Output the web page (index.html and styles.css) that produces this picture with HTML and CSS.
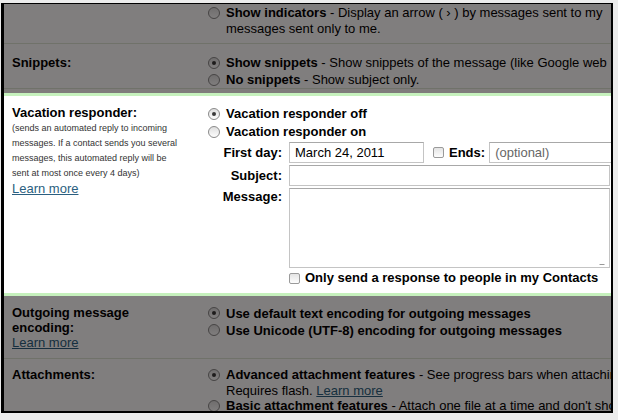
FILE: index.html
```html
<!DOCTYPE html>
<html lang="en">
  <head>
    <meta charset="UTF-8" />
    <title>Settings - Vacation responder</title>
    <link rel="stylesheet" href="styles.css">
  </head>
  <body>
    <div class="window">
      <div class="sheet">

        <div class="row dim indicators">
          <div class="label"></div>
          <div class="opts">
            <div class="opt">
              <span class="radio"></span>
              <span class="txt"><b>Show indicators</b> - Display an arrow ( &rsaquo; ) by messages sent to my<br>messages sent only to me.</span>
            </div>
          </div>
        </div>

        <div class="row dim snippets">
          <div class="label"><b>Snippets:</b></div>
          <div class="opts">
            <div class="opt"><span class="radio on"></span><span class="txt"><b>Show snippets</b> - Show snippets of the message (like Google web</span></div>
            <div class="opt"><span class="radio"></span><span class="txt"><b>No snippets</b> - Show subject only.</span></div>
          </div>
        </div>

        <div class="row vacation">
          <div class="label">
            <b>Vacation responder:</b>
            <div class="note">(sends an automated reply to incoming<br>messages. If a contact sends you several<br>messages, this automated reply will be<br>sent at most once every 4 days)</div>
            <a href="#" class="more">Learn more</a>
          </div>
          <div class="opts">
            <div class="opt"><span class="radio on"></span><span class="txt"><b>Vacation responder off</b></span></div>
            <div class="opt"><span class="radio"></span><span class="txt"><b>Vacation responder on</b></span></div>
            <div class="form">
              <label class="flabel">First day:</label>
              <div class="dates">
                <div class="field date">March 24, 2011</div>
                <span class="check"></span>
                <b class="ends">Ends:</b>
                <div class="field end">(optional)</div>
              </div>
              <label class="flabel">Subject:</label>
              <div class="field subject"></div>
              <label class="flabel">Message:</label>
              <div class="field message"><span class="grip"></span></div>
              <div class="contacts">
                <span class="check"></span>
                <b>Only send a response to people in my Contacts</b>
              </div>
            </div>
          </div>
        </div>

        <div class="row dim encoding">
          <div class="label"><b>Outgoing message<br>encoding:</b><br><a href="#" class="more">Learn more</a></div>
          <div class="opts">
            <div class="opt"><span class="radio on"></span><span class="txt"><b>Use default text encoding for outgoing messages</b></span></div>
            <div class="opt"><span class="radio"></span><span class="txt"><b>Use Unicode (UTF-8) encoding for outgoing messages</b></span></div>
          </div>
        </div>

        <div class="row dim attachments">
          <div class="label"><b>Attachments:</b></div>
          <div class="opts">
            <div class="opt"><span class="radio on"></span><span class="txt"><b>Advanced attachment features</b> - See progress bars when attaching files.<br>Requires flash. <a href="#" class="more">Learn more</a></span></div>
            <div class="opt"><span class="radio"></span><span class="txt"><b>Basic attachment features</b> - Attach one file at a time and don't show progress.</span></div>
          </div>
        </div>

      </div>
    </div>
  </body>
</html>
```

FILE: styles.css
```css
body {
  margin: 0;
  background-color: #ececec;
  font-family: "Liberation Sans", Arial, sans-serif;
  font-size: 13px;
  color: #000;
}
.window {
  margin: 3px 0 0 1px;
  width: 607px;
  height: 407px;
  border-style: solid;
  border-color: #000;
  border-width: 1px 2px 2px 3px;
  overflow: hidden;
}
.sheet {
  width: 760px;
  min-height: 100%;
  background-color: #7f7c7b; /* white under the dim layer */
}
.row {
  display: grid;
  grid-template-columns: 196px 1fr;
  padding-left: 8px;
  background-color: #fff;
  border-bottom: 1px solid #dfe6d6;
  position: relative;
}
.dim::after {
  content: "";
  position: absolute;
  inset: 0 0 -1px 0;
  background-color: rgba(4, 0, 0, 0.505);
}
.opts {
  white-space: nowrap;
}
.opt {
  display: flex;
  align-items: flex-start;
}
.radio {
  flex: none;
  width: 12px;
  height: 12px;
  margin-right: 6px;
  box-sizing: border-box;
  border: 1px solid #8a8a8a;
  border-radius: 50%;
  background: linear-gradient(#dedede, #fdfdfd);
  position: relative;
}
.radio.on::after {
  content: "";
  position: absolute;
  left: 3px;
  top: 3px;
  width: 4px;
  height: 4px;
  border-radius: 50%;
  background-color: #3a3a3a;
}
.check {
  flex: none;
  display: inline-block;
  width: 11px;
  height: 11px;
  box-sizing: border-box;
  border: 1px solid #9a9a9a;
  border-radius: 2px;
  background: linear-gradient(#e4e4e4, #fdfdfd);
}
a.more {
  color: #2b5f80;
  text-decoration: underline;
  font-weight: normal;
}

/* rows */
.indicators {
  padding-top: 1px;
  padding-bottom: 6px;
  line-height: 16px;
}
.indicators .radio {
  margin-top: 2px;
}
.snippets {
  padding-top: 10px;
  line-height: 17px;
}
.snippets .radio {
  margin-top: 3px;
}
.vacation {
  margin-top: 4px;
  border-top: 3px solid #c6f1bd;
  border-bottom: 3px solid #c6f1bd;
  padding-top: 9px;
  padding-bottom: 7px;
  line-height: 16px;
}
.vacation .opt {
  line-height: 18px;
}
.vacation .radio {
  margin-top: 3px;
}
.note {
  font-size: 9px;
  line-height: 15px;
  color: #333;
}
.vacation .more {
  display: inline-block;
  line-height: 16px;
}

/* vacation form */
.form {
  display: grid;
  grid-template-columns: 74px 1fr;
  column-gap: 7px;
  row-gap: 2px;
  margin-top: 1px;
}
.flabel {
  font-weight: bold;
  text-align: right;
  line-height: 21px;
}
.form .flabel:nth-of-type(3) {
  line-height: 18px;
}
.field {
  box-sizing: border-box;
  height: 21px;
  border: 1px solid #c4c4c4;
  border-top-color: #a8a8a8;
  background-color: #fff;
  padding: 0 5px;
  line-height: 19px;
}
.dates {
  display: flex;
  align-items: center;
}
.date {
  width: 135px;
}
.dates .check {
  margin-left: 9px;
}
.ends {
  margin-left: 5px;
  margin-right: 4px;
}
.end {
  width: 200px;
  color: #666;
}
.subject {
  width: 321px;
}
.message {
  width: 321px;
  height: 80px;
  position: relative;
}
.grip {
  position: absolute;
  right: 2px;
  bottom: 2px;
  width: 5px;
  height: 5px;
  border-bottom: 1px solid #999;
  transform: skewX(-45deg);
}
.contacts {
  grid-column: 2;
  display: flex;
  align-items: center;
  gap: 5px;
  margin-top: 0;
  line-height: 16px;
}

.encoding {
  padding-top: 9px;
  padding-bottom: 8px;
}
.encoding .label {
  line-height: 15px;
}
.encoding .opt {
  line-height: 17px;
}
.encoding .radio {
  margin-top: 2px;
}
.attachments {
  padding-top: 8px;
  line-height: 15.5px;
}
.attachments .label {
  line-height: 16px;
}
.attachments .radio {
  margin-top: 2px;
}
```
